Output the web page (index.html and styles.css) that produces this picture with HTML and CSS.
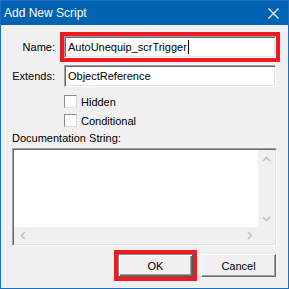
FILE: index.html
```html
<!DOCTYPE html>
<html lang="en">
<head>
    <meta charset="UTF-8">
    <title>Add New Script</title>
    <link rel="stylesheet" href="styles.css">
</head>
<body>
    <div class="dialog">
        <div class="titlebar">
            <span class="title">Add New Script</span>
            <svg class="close" width="11" height="11" viewBox="0 0 11 11">
                <path d="M0.5 0.5 L10.5 10.5 M10.5 0.5 L0.5 10.5" stroke="#fff" stroke-width="1.1" fill="none"/>
            </svg>
        </div>

        <div class="content">
            <div class="fieldRow">
                <span class="fieldLabel">Name:</span>
                <div class="textbox marked">AutoUnequip_scrTrigger<span class="caret"></span></div>
            </div>
            <div class="fieldRow">
                <span class="fieldLabel">Extends:</span>
                <div class="textbox">ObjectReference</div>
            </div>

            <div class="checkRow"><span class="checkbox"></span>Hidden</div>
            <div class="checkRow"><span class="checkbox"></span>Conditional</div>

            <div class="docLabel">Documentation String:</div>
            <div class="memo">
                <div class="memoText"></div>
                <div class="vscroll">
                    <div class="arrow">
                        <svg width="9" height="6" viewBox="0 0 9 6"><path d="M1 5 L4.5 1.5 L8 5" stroke="#c2c2c2" stroke-width="1.6" fill="none"/></svg>
                    </div>
                    <div class="arrow">
                        <svg width="9" height="6" viewBox="0 0 9 6"><path d="M1 1 L4.5 4.5 L8 1" stroke="#c2c2c2" stroke-width="1.6" fill="none"/></svg>
                    </div>
                </div>
                <div class="hscroll">
                    <div class="arrow">
                        <svg width="6" height="9" viewBox="0 0 6 9"><path d="M5 1 L1.5 4.5 L5 8" stroke="#c2c2c2" stroke-width="1.6" fill="none"/></svg>
                    </div>
                    <div class="arrow">
                        <svg width="6" height="9" viewBox="0 0 6 9"><path d="M1 1 L4.5 4.5 L1 8" stroke="#c2c2c2" stroke-width="1.6" fill="none"/></svg>
                    </div>
                </div>
                <div class="corner"></div>
            </div>

            <div class="buttons">
                <button class="btn default marked">OK</button>
                <button class="btn">Cancel</button>
            </div>
        </div>
    </div>
</body>
</html>
```

FILE: styles.css
```css
body {
    margin: 0;
    font-family: "Liberation Sans", Arial, sans-serif;
    font-size: 11px;
    color: #000;
}

.dialog {
    width: 289px;
    height: 289px;
    box-sizing: border-box;
    border: 1px solid #1a6fc0;
    background-color: #f0f0f0;
    display: flex;
    flex-direction: column;
}

.titlebar {
    height: 24px;
    flex: none;
    background-color: #0063b1;
    display: flex;
    align-items: center;
    justify-content: space-between;
    padding: 0 9px 0 3px;
}

.title {
    color: #fff;
    font-size: 12px;
}

.close {
    display: block;
}

.content {
    padding: 11px;
    display: flex;
    flex-direction: column;
}

.fieldRow {
    display: flex;
    align-items: center;
    height: 22px;
    margin-bottom: 7px;
}

.fieldRow + .fieldRow {
    margin-bottom: 5px;
}

.fieldLabel {
    width: 43px;
    text-align: right;
    margin-right: 9px;
    white-space: nowrap;
}

.textbox {
    width: 212px;
    height: 22px;
    box-sizing: border-box;
    background-color: #fff;
    border: 1px solid;
    border-color: #a0a0a0 #fff #fff #a0a0a0;
    box-shadow: inset 1px 1px 0 #696969, inset -1px -1px 0 #e3e3e3;
    padding: 0 3px;
    line-height: 20px;
    white-space: nowrap;
}

.caret {
    display: inline-block;
    width: 1px;
    height: 14px;
    background-color: #000;
    vertical-align: -3px;
    margin-left: 1px;
}

.marked {
    outline: 4px solid #ed1c24;
}

.checkRow {
    height: 19px;
    display: flex;
    align-items: center;
    padding-left: 52px;
}

.checkbox {
    width: 13px;
    height: 13px;
    box-sizing: border-box;
    background-color: #fff;
    border: 1px solid;
    border-color: #8c8c8c #dadada #dadada #8c8c8c;
    margin-right: 4px;
}

.docLabel {
    margin-top: 1px;
    height: 14px;
    line-height: 14px;
}

.memo {
    margin-top: 3px;
    height: 98px;
    width: 265px;
    box-sizing: border-box;
    border: 1px solid;
    border-color: #a0a0a0 #fff #fff #a0a0a0;
    box-shadow: inset 1px 1px 0 #696969, inset -1px -1px 0 #e3e3e3;
    padding: 1px;
    display: grid;
    grid-template-columns: 1fr 17px;
    grid-template-rows: 1fr 17px;
}

.memoText {
    background-color: #fff;
}

.vscroll {
    background-color: #f0f0f0;
    display: flex;
    flex-direction: column;
    justify-content: space-between;
}

.hscroll {
    background-color: #f0f0f0;
    display: flex;
    justify-content: space-between;
}

.corner {
    background-color: #f0f0f0;
}

.arrow {
    width: 17px;
    height: 17px;
    display: flex;
    align-items: center;
    justify-content: center;
}

.buttons {
    margin-top: 8px;
    display: flex;
    justify-content: flex-end;
    gap: 8px;
    padding-right: 1px;
}

.btn {
    width: 75px;
    height: 23px;
    box-sizing: border-box;
    font-family: "Liberation Sans", Arial, sans-serif;
    font-size: 11px;
    color: #000;
    background-color: #f0f0f0;
    border: 1px solid;
    border-color: #fff #696969 #696969 #fff;
    box-shadow: inset -1px -1px 0 #a0a0a0;
    padding: 0;
}

.btn.default {
    border-color: #8a8a8a #5a5a5a #5a5a5a #8a8a8a;
    box-shadow: inset 1px 1px 0 #fff, inset -1px -1px 0 #696969, inset -2px -2px 0 #a0a0a0;
}
```
